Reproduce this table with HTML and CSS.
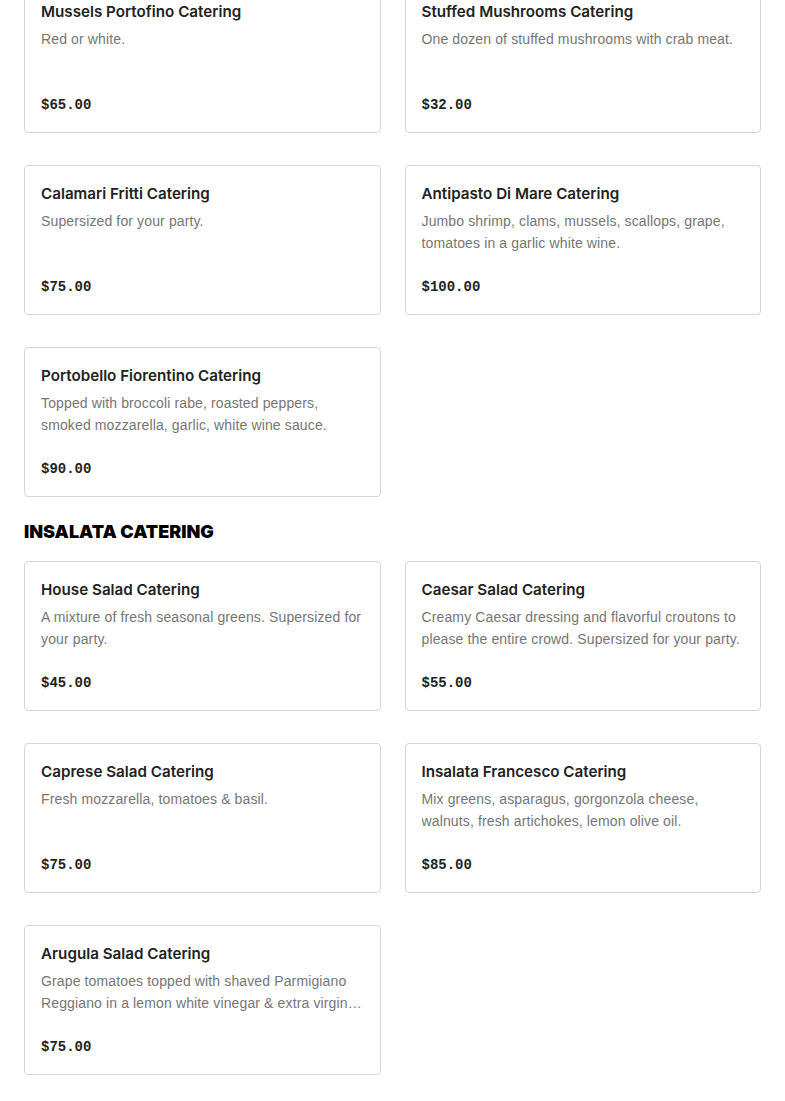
FILE: index.html
```html
<!DOCTYPE html>
<html lang="en">
<head>
<meta charset="utf-8">
<title>Catering Menu</title>
<link rel="stylesheet" href="styles.css">
</head>
<body>
<main class="menu">
  <section class="section section-first">
    <div class="grid">
      <article class="card">
        <h3 class="card-title">Mussels Portofino Catering</h3>
        <p class="card-desc">Red or white.</p>
        <div class="card-price">$65.00</div>
      </article>
      <article class="card">
        <h3 class="card-title">Stuffed Mushrooms Catering</h3>
        <p class="card-desc">One dozen of stuffed mushrooms with crab meat.</p>
        <div class="card-price">$32.00</div>
      </article>
      <article class="card">
        <h3 class="card-title">Calamari Fritti Catering</h3>
        <p class="card-desc">Supersized for your party.</p>
        <div class="card-price">$75.00</div>
      </article>
      <article class="card">
        <h3 class="card-title">Antipasto Di Mare Catering</h3>
        <p class="card-desc">Jumbo shrimp, clams, mussels, scallops, grape, tomatoes in a garlic white wine.</p>
        <div class="card-price">$100.00</div>
      </article>
      <article class="card">
        <h3 class="card-title">Portobello Fiorentino Catering</h3>
        <p class="card-desc">Topped with broccoli rabe, roasted peppers, smoked mozzarella, garlic, white wine sauce.</p>
        <div class="card-price">$90.00</div>
      </article>
    </div>
  </section>

  <section class="section">
    <h2 class="section-title">INSALATA CATERING</h2>
    <div class="grid">
      <article class="card">
        <h3 class="card-title">House Salad Catering</h3>
        <p class="card-desc">A mixture of fresh seasonal greens. Supersized for your party.</p>
        <div class="card-price">$45.00</div>
      </article>
      <article class="card">
        <h3 class="card-title">Caesar Salad Catering</h3>
        <p class="card-desc">Creamy Caesar dressing and flavorful croutons to please the entire crowd. Supersized for your party.</p>
        <div class="card-price">$55.00</div>
      </article>
      <article class="card">
        <h3 class="card-title">Caprese Salad Catering</h3>
        <p class="card-desc">Fresh mozzarella, tomatoes &amp; basil.</p>
        <div class="card-price">$75.00</div>
      </article>
      <article class="card">
        <h3 class="card-title">Insalata Francesco Catering</h3>
        <p class="card-desc">Mix greens, asparagus, gorgonzola cheese, walnuts, fresh artichokes, lemon olive oil.</p>
        <div class="card-price">$85.00</div>
      </article>
      <article class="card">
        <h3 class="card-title">Arugula Salad Catering</h3>
        <p class="card-desc">Grape tomatoes topped with shaved Parmigiano Reggiano in a lemon white vinegar &amp; extra virgin olive oil dressing.</p>
        <div class="card-price">$75.00</div>
      </article>
    </div>
  </section>
</main>
</body>
</html>
```

FILE: styles.css
```css
* {
  box-sizing: border-box;
}

html, body {
  margin: 0;
  padding: 0;
  background: #ffffff;
}

body {
  font-family: Inter, "Noto Sans", "Liberation Sans", sans-serif;
  color: #222222;
  overflow: hidden;
}

.menu {
  padding: 0 24px;
}

.section-first {
  margin-top: -17px;
}

.section-title {
  margin: 23px 0 17px;
  font-family: Inter, "Liberation Sans", sans-serif;
  font-weight: 900;
  font-size: 18px;
  line-height: 24px;
  color: #000000;
}

.grid {
  display: grid;
  grid-template-columns: 1fr 1fr;
  column-gap: 24px;
  row-gap: 32px;
}

.card {
  border: 1px solid #d6d6d6;
  border-radius: 4px;
  padding: 16px 16px 17px;
  display: flex;
  flex-direction: column;
  background: #ffffff;
}

.card-title {
  margin: 0 0 4px;
  font-family: Inter, "Liberation Sans", sans-serif;
  font-size: 15.2px;
  font-weight: 600;
  line-height: 24px;
  color: #222222;
}

.card-desc {
  margin: 0 0 23px;
  font-family: "Liberation Sans", Arial, sans-serif;
  font-size: 14px;
  letter-spacing: 0.13px;
  line-height: 22px;
  height: 44px;
  color: #767676;
  display: -webkit-box;
  -webkit-line-clamp: 2;
  -webkit-box-orient: vertical;
  overflow: hidden;
}

.card-price {
  font-family: "Liberation Mono", "DejaVu Sans Mono", monospace;
  font-weight: 700;
  font-size: 14px;
  line-height: 20px;
  color: #222222;
}
```
